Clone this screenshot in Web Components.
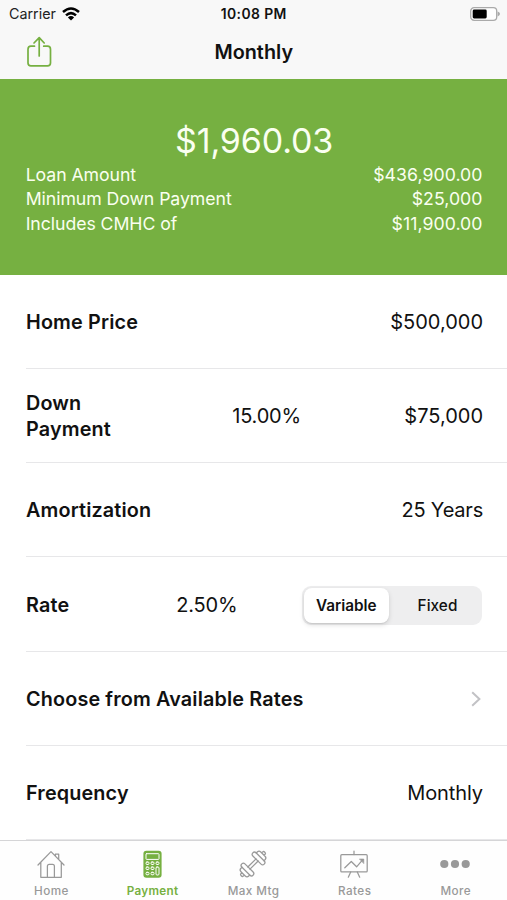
<!DOCTYPE html>
<html lang="en">
<head>
<meta charset="utf-8">
<title>Monthly</title>
<style>
html, body { margin: 0; height: 100%; }
body { background: #fff; color: #111; font-family: Inter, "Liberation Sans", sans-serif; overflow: hidden; }
</style>
</head>
<body>
<mortgage-app></mortgage-app>
<script>
class BaseElement extends HTMLElement {
  connectedCallback() {
    if (this.shadowRoot) return;
    this.attachShadow({ mode: 'open' }).innerHTML =
      '<style>:host{box-sizing:border-box}*{box-sizing:border-box}svg{display:block}' + this.css() + '</style>' + this.html();
  }
}

class StatusBar extends BaseElement {
  css() { return `
    :host{display:grid;grid-template-columns:1fr auto 1fr;align-items:center;height:28px;padding:0 7px 0 9px;line-height:18px}
    .left{display:flex;align-items:center;gap:6px;font-size:14.3px;letter-spacing:0;color:#222}
    .time{font-size:13.9px;font-weight:600;letter-spacing:.42px;margin-right:1.5px}
    .battery{justify-self:end}`; }
  html() { return `
    <div class="left"><span>Carrier</span>
      <svg width="18" height="14" viewBox="0 0 18 14" fill="none" stroke="#000" stroke-width="2.5">
        <path d="M1 5Q9-2 17 5"/><path d="M4 8.4Q9 3.8 14 8.4"/><path d="M9 13.5L5.9 10.4Q9 7.8 12.1 10.4Z" fill="#000" stroke="none"/>
      </svg></div>
    <div class="time">10:08 PM</div>
    <svg class="battery" width="30" height="14" viewBox="0 0 30 14">
      <rect x=".7" y=".7" width="26" height="12.6" rx="3.4" fill="#fff" stroke="#aaa" stroke-width="1.3"/>
      <rect x="2.7" y="2.5" width="14" height="9" rx="1.4" fill="#000"/><path d="M27.6 4.6Q30 5.5 30 7T27.6 9.4Z" fill="#aaa"/>
    </svg>`; }
}

class NavBar extends BaseElement {
  css() { return `
    :host{display:grid;grid-template-columns:1fr auto 1fr;align-items:center;height:51px;padding:0 25.5px 0 26px}
    h1{margin:0;font-size:19.8px;line-height:24px;font-weight:600;letter-spacing:.02px;padding-bottom:3px}
    svg{margin-bottom:4px}`; }
  html() { return `
    <svg width="26" height="32" viewBox="0 0 26 32" fill="none" stroke="#76b041" stroke-width="1.7" stroke-linecap="round" stroke-linejoin="round">
      <path d="M8.5 10.2H5Q2 10.2 2 13.2V27Q2 29.8 5 29.8H21.5Q24.5 29.8 24.5 27V13.2Q24.5 10.2 21.5 10.2H17.7M13.2 20V2M8 7L13.2 1.7L18.2 7"/>
    </svg><h1><slot></slot></h1>`; }
}

class SummaryLine extends BaseElement {
  css() { return `:host{display:flex;justify-content:space-between;font-size:17.7px;line-height:24.4px}
    .label{letter-spacing:-.07px}.value{letter-spacing:.04px}`; }
  html() { return `<span class="label"><slot></slot></span><span class="value"><slot name="value"></slot></span>`; }
}

class PaymentSummary extends BaseElement {
  css() { return `
    :host{display:block;height:195.5px;background:#76b041;color:#fafff0;padding:40px 24.5px 0 25.7px}
    .total{text-align:center;font-size:34px;line-height:44px;letter-spacing:-.15px}`; }
  html() { return `<div class="total"><slot name="total"></slot></div><slot></slot>`; }
}

class FormRow extends BaseElement {
  css() { return `
    :host{display:flex;align-items:center;height:94.3px;margin-left:26px;padding:2px 24px 0 0;border-bottom:1px solid #e7e7e9;font-size:20px;line-height:26.7px}
    .label{font-weight:600;font-size:19.8px;letter-spacing:.15px;width:var(--label-width,auto)}
    .middle{letter-spacing:-.18px}
    .value{margin-left:auto;letter-spacing:var(--value-tracking,0)}`; }
  html() { return `<span class="label"><slot></slot></span><span class="middle"><slot name="middle"></slot></span><span class="value"><slot name="value"></slot></span>`; }
}

class SegmentedControl extends BaseElement {
  css() { return `
    :host{display:grid;grid-template-columns:84.5px 1fr;width:180px;height:39px;margin-right:1px;padding:2px;background:#eeeeef;border-radius:9px;font-size:15.3px;font-weight:500;line-height:35px;text-align:center;letter-spacing:.07px}
    .fixed{padding-left:6.5px}
    .selected{background:#fff;border-radius:8px;box-shadow:0 2px 5px #0002,0 1px 1px #0001;font-weight:600;letter-spacing:0}`; }
  html() { return `<div class="selected"><slot name="selected"></slot></div><div class="fixed"><slot></slot></div>`; }
}

class ChevronIcon extends BaseElement {
  css() { return ':host{display:block;margin-right:2px}'; }
  html() { return `<svg width="10" height="16" viewBox="0 0 10 16" fill="none" stroke="#c2c2c5" stroke-width="2"><path d="M1.2 1.2L8.4 8L1.2 14.8"/></svg>`; }
}

const tabIcons = {
  home: `<path d="M1 15L14 1.6L27 15M3.8 12.4V27.3H10.4V16.3Q10.4 14.3 12.2 14.3H15.6Q17.4 14.3 17.4 16.3V27.3H24.3V12.4M18.4 6V4.2H21.7V9.4M10.4 27.3H17.4"/>`,
  payment: `<rect x="5.4" y=".7" width="18.2" height="27" rx="3" fill="currentColor" stroke="none"/>
    <g stroke="#fff" stroke-width="1"><rect x="8" y="3.7" width="13" height="5.7" rx=".6"/>
    <rect x="8" y="12" width="3" height="2.5" rx="1"/><rect x="13" y="12" width="3" height="2.5" rx="1"/><rect x="18" y="12" width="3" height="2.5" rx="1"/>
    <rect x="8" y="17" width="3" height="2.5" rx="1"/><rect x="13" y="17" width="3" height="2.5" rx="1"/><rect x="18" y="17" width="3" height="8" rx="1"/>
    <rect x="8" y="22.3" width="3" height="2.5" rx="1"/><rect x="13" y="22.3" width="3" height="2.5" rx="1"/></g>`,
  weights: `<g transform="rotate(-45 14 14)"><path d="M8.2 12.5H19.8M8.2 15.5H19.8"/>
    <rect x="3.9" y="6" width="4.5" height="16" rx="2.2"/><path d="M3.9 8.5H2.5Q0 8.5 0 11V17Q0 19.5 2.5 19.5H3.9M0 12.3H-1.5Q-2.7 12.3-2.7 14T-1.5 15.7H0"/>
    <rect x="19.6" y="6" width="4.5" height="16" rx="2.2"/><path d="M24.1 8.5H25.5Q28 8.5 28 11V17Q28 19.5 25.5 19.5H24.1M28 12.3H29.5Q30.7 12.3 30.7 14T29.5 15.7H28"/></g>`,
  rates: `<rect x=".8" y="4.7" width="26.4" height="17.2" rx="1"/><path d="M14 1V4.5M10.7 22L8.3 27.2M17.3 22L19.7 27.2M4.8 17.8L11.3 11.5L16.6 16.8L22.8 9.7"/><path d="M19.7 9H23.8V13.3Z" fill="currentColor" stroke-width=".6"/>`,
  more: `<g fill="currentColor" stroke="none"><circle cx="3.3" cy="14" r="4.1"/><circle cx="14" cy="14" r="4.1"/><circle cx="24.7" cy="14" r="4.1"/></g>`
};

class TabItem extends BaseElement {
  css() { return `
    :host{display:flex;flex-direction:column;align-items:center;padding-top:8.6px;color:#999;font-size:11.7px;font-weight:500;line-height:16px;letter-spacing:.42px}
    :host([selected]){color:#76b041;font-weight:600;letter-spacing:.3px}
    svg{overflow:visible;margin-bottom:5px}
    span{margin-right:-.8px}`; }
  html() { return `<svg width="28" height="28" viewBox="0 0 28 28" fill="none" stroke="currentColor" stroke-width="1.25" stroke-linejoin="round" stroke-linecap="round">${tabIcons[this.getAttribute('icon')]}</svg><span><slot></slot></span>`; }
}

class TabBar extends BaseElement {
  css() { return ':host{display:grid;grid-template-columns:repeat(5,101.1px);justify-content:start;height:60px;background:#fefefe;border-top:1px solid #d5d5d7;padding-left:.5px}'; }
  html() { return '<slot></slot>'; }
}

class MortgageApp extends BaseElement {
  css() { return `
    :host{display:grid;grid-template-rows:79px 1fr 60px;height:100vh;overflow:hidden}
    header{background:#f8f8f8}
    main{overflow:hidden;min-height:0}`; }
  html() { return `
    <header><status-bar></status-bar><nav-bar>Monthly</nav-bar></header>
    <main>
      <payment-summary><span slot="total">$1,960.03</span>
        <summary-line>Loan Amount<span slot="value">$436,900.00</span></summary-line>
        <summary-line>Minimum Down Payment<span slot="value">$25,000</span></summary-line>
        <summary-line>Includes CMHC of<span slot="value">$11,900.00</span></summary-line>
      </payment-summary>
      <form-row>Home Price<span slot="value">$500,000</span></form-row>
      <form-row style="--label-width:206.2px">Down<br>Payment<span slot="middle">15.00%</span><span slot="value">$75,000</span></form-row>
      <form-row style="--value-tracking:-.2px">Amortization<span slot="value">25 Years</span></form-row>
      <form-row style="--label-width:150.3px">Rate<span slot="middle">2.50%</span><segmented-control slot="value"><span slot="selected">Variable</span>Fixed</segmented-control></form-row>
      <form-row>Choose from Available Rates<chevron-icon slot="value"></chevron-icon></form-row>
      <form-row style="--value-tracking:-.1px">Frequency<span slot="value">Monthly</span></form-row>
    </main>
    <tab-bar>
      <tab-item icon="home">Home</tab-item><tab-item icon="payment" selected>Payment</tab-item>
      <tab-item icon="weights">Max Mtg</tab-item><tab-item icon="rates">Rates</tab-item><tab-item icon="more">More</tab-item>
    </tab-bar>`; }
}

customElements.define('status-bar', StatusBar);
customElements.define('nav-bar', NavBar);
customElements.define('summary-line', SummaryLine);
customElements.define('payment-summary', PaymentSummary);
customElements.define('form-row', FormRow);
customElements.define('segmented-control', SegmentedControl);
customElements.define('chevron-icon', ChevronIcon);
customElements.define('tab-item', TabItem);
customElements.define('tab-bar', TabBar);
customElements.define('mortgage-app', MortgageApp);
</script>
</body>
</html>
